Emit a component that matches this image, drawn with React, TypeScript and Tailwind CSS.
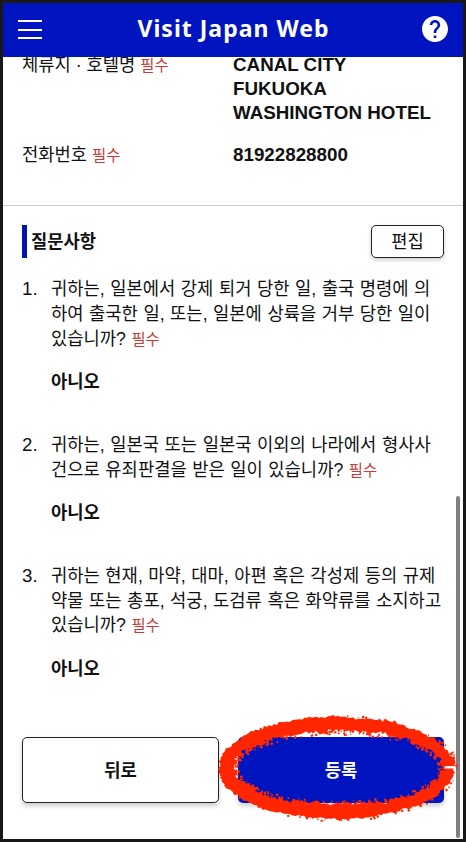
import type { ReactNode } from 'react'

const questions = [
  {
    lines: ['귀하는, 일본에서 강제 퇴거 당한 일, 출국 명령에 의', '하여 출국한 일, 또는, 일본에 상륙을 거부 당한 일이', '있습니까?'],
    answer: '아니오',
  },
  {
    lines: ['귀하는, 일본국 또는 일본국 이외의 나라에서 형사사', '건으로 유죄판결을 받은 일이 있습니까?'],
    answer: '아니오',
  },
  {
    lines: ['귀하는 현재, 마약, 대마, 아편 혹은 각성제 등의 규제', '약물 또는 총포, 석궁, 도검류 혹은 화약류를 소지하고', '있습니까?'],
    answer: '아니오',
  },
]

function Required() {
  return <span className="text-[15.4px] text-[#c93a35]">필수</span>
}

function Row({ label, children }: { label: string; children: ReactNode }) {
  return (
    <div className="flex">
      <dt className="w-[211px] shrink-0 whitespace-nowrap">{label} <Required /></dt>
      <dd className="text-[18.8px] font-bold whitespace-nowrap">{children}</dd>
    </div>
  )
}

// small seeded generator so the brush looks the same on every render
function seeded(seed: number) {
  let s = seed
  return () => {
    s = (s * 16807) % 2147483647
    return s / 2147483647
  }
}

function brushStroke() {
  const rand = seeded(77)
  const at = (a: number, r: number) => {
    const x = 121.5 + Math.cos(a) * (111.5 + r)
    const y = 54 + Math.sin(a) * (44.5 + r)
    return `${x.toFixed(1)} ${y.toFixed(1)}`
  }
  const outer: string[] = []
  const inner: string[] = []
  const n = 260
  let wo = 0
  let wi = 0
  for (let i = 0; i < n; i++) {
    const a = 0.01 + (i / n) * (Math.PI * 2 - 0.03)
    // thinner towards the right-hand end of the loop
    const slim = 1 - 0.18 * Math.max(0, Math.cos(a))
    if (i % 3 === 0) wo = rand() * 2.4
    if (i % 4 === 0) wi = rand() * 4
    outer.push(at(a, (4.8 + wo + rand() * 2.1) * slim))
    inner.push(at(a, (-4.2 - wi - rand() * 3.2) * slim))
  }
  let d = `M${outer.join('L')}L${inner.reverse().join('L')}Z`
  for (let i = 0; i < 380; i++) {
    const a = rand() * Math.PI * 2
    const r = rand() > 0.2 ? -6.5 - rand() * 5 : 6 + rand() * 2.4
    const w = 0.8 + rand() * 1.6
    d += `M${at(a, r)}l${w.toFixed(1)} -0.8l0.7 ${w.toFixed(1)}l-${w.toFixed(1)} 0.7Z`
  }
  return d
}

const stroke = brushStroke()

export default function App() {
  return (
    <div className="relative flex h-[842px] w-[466px] flex-col overflow-hidden border-[3px] border-[#191919] bg-white font-['Liberation_Sans','Noto_Sans_CJK_KR',sans-serif] text-[17.7px] leading-[24.8px] text-[#111]">
      <header className="flex h-[54px] shrink-0 items-center justify-between bg-[#0014c0] pr-[15px] pl-[15px] text-white">
        <button aria-label="menu" className="-mt-px flex w-6 flex-col gap-[6.5px]">
          <span className="h-[2px] bg-white" />
          <span className="h-[2px] bg-white" />
          <span className="h-[2px] bg-white" />
        </button>
        <h1 className="pb-[3px] pl-[3px] font-['Noto_Sans',sans-serif] text-[23px] font-bold tracking-[1px]">Visit Japan Web</h1>
        <button aria-label="help" className="-mt-[2px]">
          <svg viewBox="2 2 20 20" className="block size-[26px]" fill="currentColor">
            <path d="M12 2C6.48 2 2 6.48 2 12s4.48 10 10 10 10-4.48 10-10S17.52 2 12 2zm1 17h-2v-2h2v2zm2.07-7.75-.9.92C13.45 12.9 13 13.5 13 15h-2v-.5c0-1.1.45-2.1 1.17-2.83l1.24-1.26c.37-.36.59-.86.59-1.41 0-1.1-.9-2-2-2s-2 .9-2 2H8c0-2.21 1.79-4 4-4s4 1.79 4 4c0 .88-.36 1.68-.93 2.25z" />
          </svg>
        </button>
      </header>

      <section className="h-[149px] shrink-0 overflow-hidden border-b border-[#ccc] pl-[19px]">
        <dl className="-mt-1 leading-[24px]">
          <Row label="체류지 · 호텔명">CANAL CITY<br />FUKUOKA<br />WASHINGTON HOTEL</Row>
          <div className="h-[18px]" />
          <Row label="전화번호">81922828800</Row>
        </dl>
      </section>

      <section className="px-[19px] pt-[19px]">
        <div className="flex h-[33px] items-center justify-between">
          <h2 className="flex h-full items-center border-l-[5px] border-[#0014b4] pt-[2px] pl-1 font-bold">질문사항</h2>
          <button className="h-[33px] w-[73px] rounded-[5px] border border-[#222] bg-white pt-[2px] shadow-[0_2px_4px_rgba(0,0,0,0.2)]">편집</button>
        </div>
        <ol className="mt-[19px]">
          {questions.map((q, i) => (
            <li key={i} className="mb-[37.6px] flex">
              <span className="w-[29px] shrink-0 text-[18.7px]">{i + 1}.</span>
              <div>
                {q.lines.map((line, n) => (
                  <p key={n} className="whitespace-nowrap [word-spacing:0.6px]">
                    {line}{n === q.lines.length - 1 && <> <Required /></>}
                  </p>
                ))}
                <p className="mt-[18px] font-bold">{q.answer}</p>
              </div>
            </li>
          ))}
        </ol>
      </section>

      <footer className="mt-[17px] flex gap-[19px] pl-[19px] font-bold">
        <button className="h-[66px] w-[197px] rounded-[5px] border border-[#222] bg-white pt-[3px] shadow-[0_3px_5px_rgba(0,0,0,0.2)]">뒤로</button>
        <button className="h-[66px] w-[206px] rounded-[5px] bg-[#0014c0] pt-[3px] text-white shadow-[0_3px_5px_rgba(0,0,0,0.2)]">등록</button>
      </footer>

      <div className="absolute top-[493px] right-[3px] h-[342px] w-1 rounded-full bg-[#808080]" />
      <svg className="absolute top-[711px] left-[213px]" width="244" height="110" viewBox="0 0 244 110" fill="#ff2600">
        <path d={stroke} />
      </svg>
    </div>
  )
}
